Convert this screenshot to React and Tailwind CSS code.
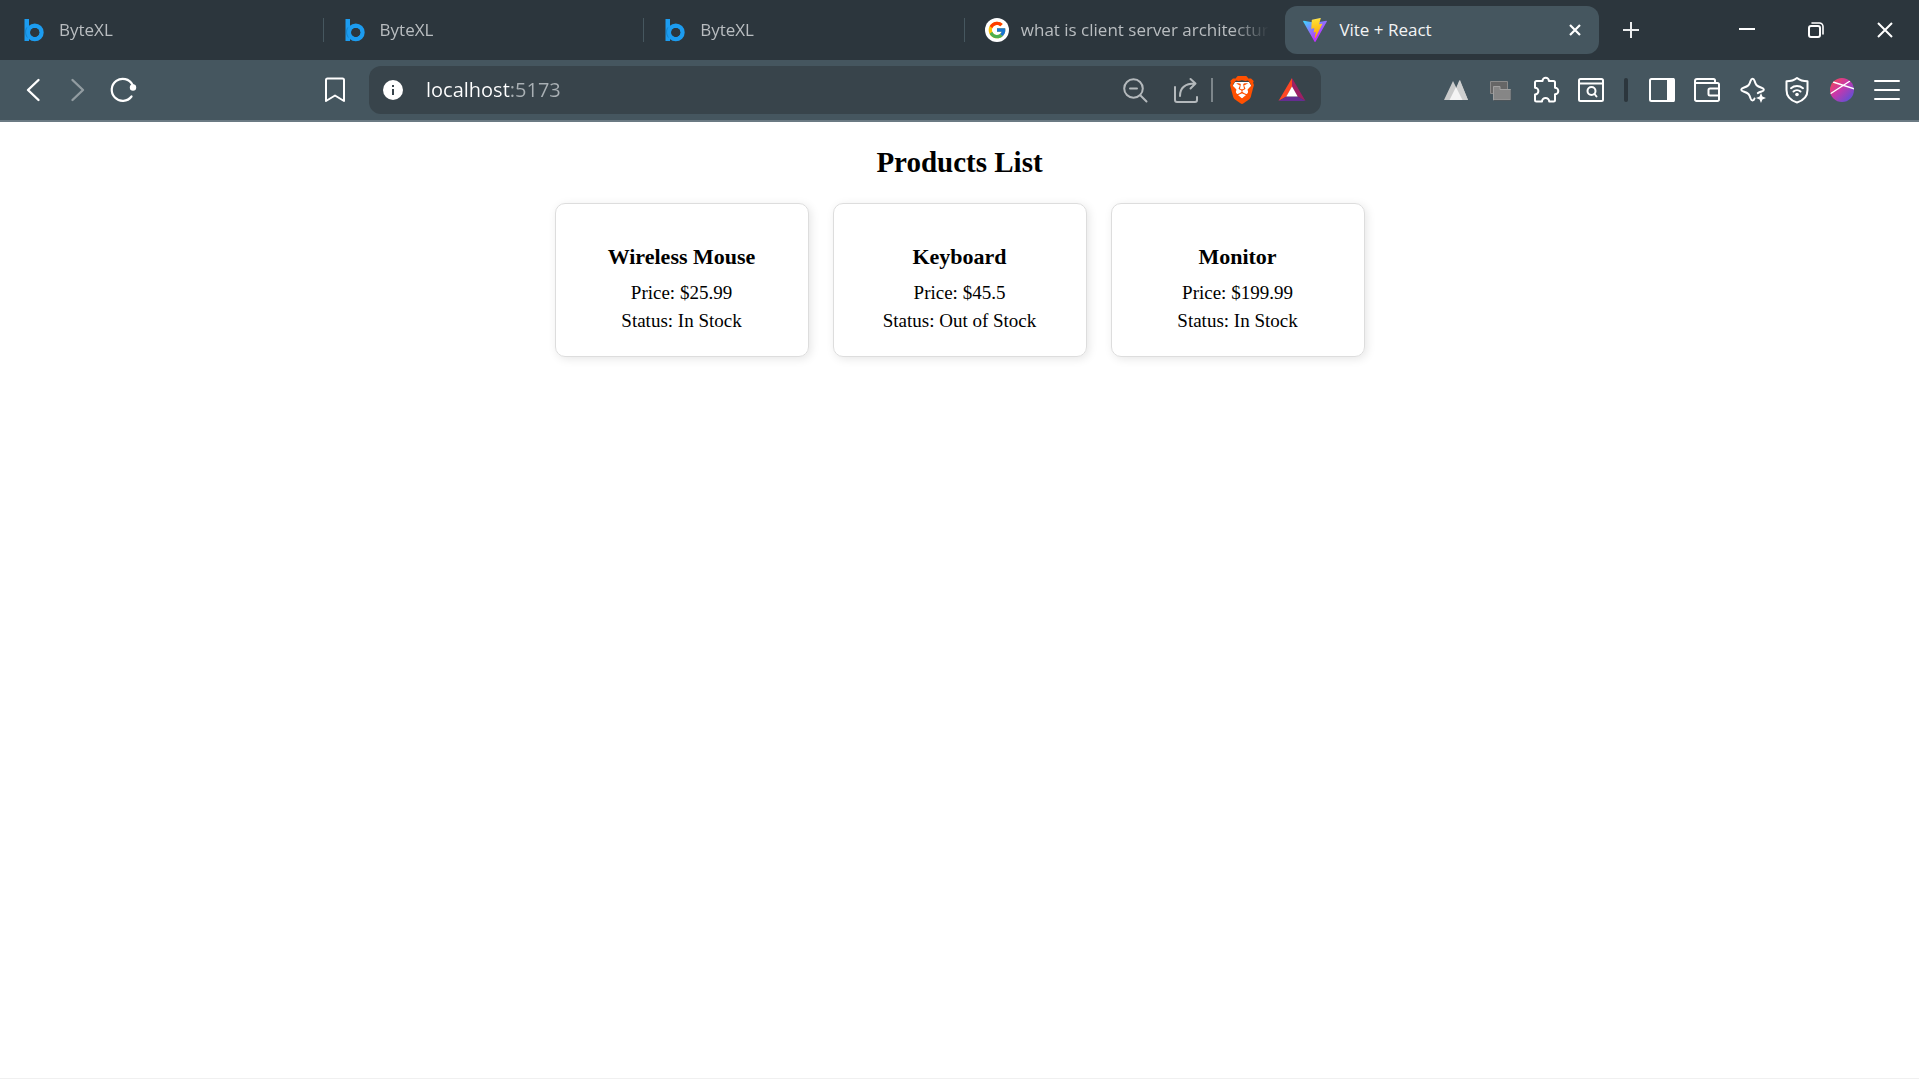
import React from "react";
import { FcGoogle } from "react-icons/fc";
import { SiBrave } from "react-icons/si";

const stroke = {
  fill: "none",
  stroke: "currentColor",
  strokeWidth: 2,
  strokeLinecap: "round",
  strokeLinejoin: "round",
};

function Icon({ children, size = 28, className = "" }) {
  return (
    <svg width={size} height={size} viewBox={`0 0 ${size} ${size}`} aria-hidden="true" className={`shrink-0 ${className}`} {...stroke}>
      {children}
    </svg>
  );
}

function ByteXLLogo() {
  return (
    <svg width="24" height="24" viewBox="0 0 24 24" aria-hidden="true" className="shrink-0" fill="none">
      <path d="M1.500 1H6v22H1.500z" fill="#1c9cf0" />
      <circle cx="11.800" cy="14.400" r="6.700" stroke="#1c9cf0" strokeWidth="4.400" />
      <circle cx="11.800" cy="14.400" r="4.500" fill="#2c363d" />
      <path d="M3.800 9.500c-1.800 3-1.600 7 .6 10" stroke="#1478bd" strokeWidth="0.800" />
    </svg>
  );
}

function GoogleLogo() {
  return (
    <span className="flex size-6 shrink-0 items-center justify-center rounded-full bg-white">
      <FcGoogle size={20} aria-hidden="true" />
    </span>
  );
}

function ViteLogo() {
  return (
    <svg width="24" height="24" viewBox="0 0 256 257" aria-hidden="true" className="shrink-0">
      <defs>
        <linearGradient id="viteBody" x1="0" x2="0.58" y1="0.08" y2="0.78">
          <stop offset="0" stopColor="#41D1FF" />
          <stop offset="1" stopColor="#BD34FE" />
        </linearGradient>
        <linearGradient id="viteBolt" x1="0.43" x2="0.5" y1="0.02" y2="0.89">
          <stop offset="0" stopColor="#FFEA83" />
          <stop offset="0.08" stopColor="#FFDD35" />
          <stop offset="1" stopColor="#FFA800" />
        </linearGradient>
      </defs>
      <path fill="url(#viteBody)" d="M255.153 37.938L134.897 252.976c-2.483 4.440-8.862 4.466-11.382.048L.875 37.958c-2.746-4.814 1.371-10.646 6.827-9.670l120.385 21.517a6.537 6.537 0 0 0 2.322-.004l117.867-21.483c5.438-.991 9.574 4.796 6.877 9.620Z" />
      <path fill="url(#viteBolt)" d="M185.432.063L96.440 17.501a3.268 3.268 0 0 0-2.634 3.014l-5.474 92.456a3.268 3.268 0 0 0 3.997 3.378l24.777-5.718c2.318-.535 4.413 1.507 3.936 3.838l-7.361 36.047c-.495 2.426 1.782 4.500 4.151 3.780l15.304-4.649c2.372-.720 4.652 1.360 4.150 3.788l-11.698 56.621c-.732 3.542 3.979 5.473 5.943 2.437l1.313-2.028l72.516-144.720c1.215-2.423-.880-5.186-3.540-4.672l-25.505 4.922c-2.396.462-4.435-1.770-3.759-4.114l16.646-57.705c.677-2.350-1.370-4.583-3.769-4.113Z" />
    </svg>
  );
}

function BraveLogo() {
  return (
    <span className="relative flex size-7 items-center justify-center text-[#ff5000]">
      <svg width="28" height="28" viewBox="0 0 28 28" aria-hidden="true" className="absolute inset-0">
        <path d="M7 6h14l3 5-4 11-6 4-6-4-4-11z" fill="#fff" />
      </svg>
      <SiBrave size={28} className="relative" aria-hidden="true" />
    </span>
  );
}

function BatLogo() {
  return (
    <svg width="28" height="28" viewBox="0 0 28 28" aria-hidden="true">
      <path d="M14 2v9L8.500 20.500 0.500 25z" fill="#ff4724" />
      <path d="M14 2v9l5.500 9.500 8 4.500z" fill="#9e1f63" />
      <path d="M0.500 25l8-4.500h11l8 4.500z" fill="#662d91" />
      <path d="M14 10.500L8.300 20.500h11.400z" fill="#fff" />
    </svg>
  );
}

function ToolButton({ label, children, className = "text-white" }) {
  return (
    <button type="button" aria-label={label} className={`flex h-12 w-[45px] shrink-0 items-center justify-center ${className}`}>
      {children}
    </button>
  );
}

function Tab({ icon, title, divided }) {
  return (
    <button type="button" role="tab" aria-selected="false" className="flex h-12 min-w-0 flex-[0_1_321px] items-center">
      <span className="flex min-w-0 flex-1 items-center gap-3 pr-4 pl-5 text-left">
        {icon}
        <span className="min-w-0 flex-1 overflow-hidden mask-r-from-85% text-[17px] leading-6 whitespace-nowrap text-[#b9bdc0]">{title}</span>
      </span>
      {divided && <span className="h-6 w-px shrink-0 bg-[#46575f]" />}
    </button>
  );
}

function TabStrip() {
  return (
    <header className="flex h-15 items-center bg-[#2c363d] pl-[3px]">
      <div role="tablist" aria-label="Open tabs" className="flex min-w-0 flex-[0_1_1596px] items-center">
        <Tab icon={<ByteXLLogo />} title="ByteXL" divided />
        <Tab icon={<ByteXLLogo />} title="ByteXL" divided />
        <Tab icon={<ByteXLLogo />} title="ByteXL" divided />
        <Tab icon={<GoogleLogo />} title="what is client server architectur" />
        <div className="flex h-12 min-w-0 flex-[0_1_314px] items-center rounded-xl bg-[#45565f] pr-3 pl-[18px]">
          <button type="button" role="tab" aria-selected="true" className="flex min-w-0 flex-1 items-center gap-3">
            <ViteLogo />
            <span className="truncate text-[17px] leading-6 text-[#f3f4f5]">Vite + React</span>
          </button>
          <button type="button" aria-label="Close tab" className="flex size-6 shrink-0 items-center justify-center text-white">
            <Icon size={12}>
              <path d="M1 1l10 10M11 1L1 11" strokeWidth="2.200" strokeLinecap="butt" />
            </Icon>
          </button>
        </div>
      </div>
      <button type="button" aria-label="New tab" className="ml-3 flex size-10 shrink-0 items-center justify-center text-[#eceeef]">
        <Icon size={16}>
          <path d="M8 0v16M0 8h16" strokeLinecap="butt" />
        </Icon>
      </button>
      <div className="ml-auto flex h-15 shrink-0 text-white">
        <button type="button" aria-label="Minimize" className="flex w-[69px] items-center justify-center">
          <Icon size={16}>
            <path d="M0 7h16" strokeLinecap="butt" />
          </Icon>
        </button>
        <button type="button" aria-label="Restore" className="flex w-[69px] items-center justify-center">
          <Icon size={16}>
            <rect x="1" y="4" width="11" height="11" rx="2" />
            <path d="M4 1h7.500a3.500 3.500 0 0 1 3.500 3.500V12" strokeWidth="1.600" />
          </Icon>
        </button>
        <button type="button" aria-label="Close window" className="flex w-[69px] items-center justify-center">
          <Icon size={16}>
            <path d="M1 1l14 14M15 1L1 15" strokeLinecap="butt" />
          </Icon>
        </button>
      </div>
    </header>
  );
}

function AddressBar() {
  return (
    <div className="ml-3 flex h-12 min-w-0 flex-1 items-center rounded-xl bg-[#38444b] pr-1 pl-[14px]">
      <button type="button" aria-label="View site information" className="shrink-0">
        <svg width="20" height="20" viewBox="0 0 20 20" aria-hidden="true">
          <circle cx="10" cy="10" r="10" fill="#fff" />
          <path d="M9 5h2v2H9zM9 9h2v6H9z" fill="#38444b" />
        </svg>
      </button>
      <input
        type="text"
        aria-label="Address"
        defaultValue="localhost:5173"
        className="ml-[23px] h-8 min-w-0 flex-1 bg-linear-[90deg,#ffffff_84px,#a9b0b4_84px] bg-clip-text text-[20px] leading-8 text-transparent caret-white outline-none"
      />
      <div className="flex shrink-0 items-center text-[#b4b9bc]">
        <button type="button" aria-label="Zoom" className="flex h-12 w-[51px] items-center justify-center">
          <Icon>
            <circle cx="12.500" cy="12.500" r="9.300" />
            <path d="M9 12.500h7M19.500 19.500l6 6" />
          </Icon>
        </button>
        <button type="button" aria-label="Share" className="flex h-12 w-[51px] items-center justify-center">
          <Icon>
            <path d="M3 11v13a2 2 0 0 0 2 2h18a2 2 0 0 0 2-2v-3" />
            <path d="M8 20c0-8 5-12.500 15-12.500M18.500 3l5 4.500-5 5" />
          </Icon>
        </button>
        <span className="h-6 w-[2px] bg-[#7d868b]" />
        <button type="button" aria-label="Brave Shields" className="ml-1 flex h-12 w-[49px] items-center justify-center">
          <BraveLogo />
        </button>
        <button type="button" aria-label="Brave Rewards" className="flex h-12 w-[51px] items-center justify-center">
          <BatLogo />
        </button>
      </div>
    </div>
  );
}

function Extensions() {
  return (
    <div className="ml-28 flex shrink-0 items-center">
      <ToolButton label="Mountain extension">
        <svg width="28" height="28" viewBox="0 0 28 28" aria-hidden="true">
          <path d="M2 24L11 5l3.500 7L18 4l8 20z" fill="#c9caca" />
          <path d="M17.500 4l-3 7L20 24h6z" fill="#cfd0d0" />
          <path d="M14 11L7.500 24h13z" fill="#f4f4f4" />
        </svg>
      </ToolButton>
      <ToolButton label="Window extension">
        <svg width="28" height="28" viewBox="0 0 28 28" aria-hidden="true">
          <path d="M3.500 5.500h17v12h-17z" fill="#666" stroke="#8b8b8b" />
          <path d="M6.500 10.500h6.500v3h10.500v10.500H6.500z" fill="#868686" stroke="#a0a0a0" />
          <path d="M7 24.500h17V14" fill="none" stroke="#4d555a" />
        </svg>
      </ToolButton>
      <ToolButton label="Extensions">
        <Icon>
          <path d="M5.500 5h5a3.200 3.200 0 0 1 6.400 0h4.600a1.500 1.500 0 0 1 1.500 1.500v5.200a3.200 3.200 0 0 1 0 6.600V24a1.500 1.500 0 0 1-1.500 1.500h-4.300a3.600 3.600 0 0 0-7.200 0H4.500A1.500 1.500 0 0 1 3 24v-5.500a3.400 3.400 0 0 0 0-6.800V6.500A1.500 1.500 0 0 1 4.500 5z" />
        </Icon>
      </ToolButton>
      <ToolButton label="Search tabs">
        <Icon>
          <rect x="2" y="3" width="24" height="22" rx="1.500" />
          <path d="M2 7.500h24" />
          <circle cx="14.500" cy="15" r="4" />
          <path d="M17.500 18l2 2.500" />
        </Icon>
      </ToolButton>
      <span className="mx-[11px] h-6 w-1 rounded-full bg-[#2c363d]" />
      <ToolButton label="Sidebar">
        <Icon>
          <rect x="2" y="3" width="24" height="22" rx="1.500" />
          <path d="M20 3h5.500v22H20z" fill="currentColor" />
        </Icon>
      </ToolButton>
      <ToolButton label="Wallet">
        <Icon>
          <path d="M22 7V4.500A1.500 1.500 0 0 0 20.500 3H4a2 2 0 0 0-2 2v18.500A1.500 1.500 0 0 0 3.500 25h21a1.500 1.500 0 0 0 1.500-1.500v-15A1.500 1.500 0 0 0 24.500 7H2.500" />
          <path d="M26 12.500h-9a1.500 1.500 0 0 0-1.500 1.500v4a1.500 1.500 0 0 0 1.500 1.500h9" />
        </Icon>
      </ToolButton>
      <ToolButton label="Leo AI">
        <Icon>
          <path d="M16.500 22.500c-.8 2.600-3 2.600-3.900 0-1.300-4.300-2-5.300-7.100-7-3-1-3-2.700 0-3.700 5.100-1.700 5.800-2.700 7.100-7 .9-2.600 3.100-2.600 3.900 0 1.300 4.300 2 5.300 7.100 7 3 1 3 2.700 0 3.700-1.500.500-2.800 1-3.800 1.600" />
          <path d="M23 17l1.400 3.600L28 22l-3.600 1.400L23 27l-1.400-3.600L18 22l3.600-1.400z" fill="currentColor" stroke="none" />
        </Icon>
      </ToolButton>
      <ToolButton label="VPN">
        <Icon>
          <path d="M14 2c3 2.500 6.500 3.300 10.500 3.300V14c0 6-4 10.500-10.500 12.500C7.500 24.500 3.500 20 3.500 14V5.300C7.500 5.300 11 4.500 14 2z" />
          <path d="M8 12.200c3.500-3 8.500-3 12 0M10.500 15.500c2-1.800 5-1.800 7 0" />
          <circle cx="14" cy="18.500" r="1.800" fill="currentColor" stroke="none" />
        </Icon>
      </ToolButton>
      <ToolButton label="Profile">
        <svg width="24" height="24" viewBox="0 0 24 24" aria-hidden="true">
          <defs>
            <linearGradient id="profile" x1="0" x2="1" y1="0" y2="1">
              <stop offset="0.100" stopColor="#f0465c" />
              <stop offset="0.450" stopColor="#c837ab" />
              <stop offset="0.900" stopColor="#5b51d8" />
            </linearGradient>
            <clipPath id="profileClip"><circle cx="12" cy="12" r="12" /></clipPath>
          </defs>
          <circle cx="12" cy="12" r="12" fill="url(#profile)" />
          <path d="M0 16L20 3M3 4l22 7" clipPath="url(#profileClip)" fill="none" stroke="#fff" strokeWidth="1.400" />
        </svg>
      </ToolButton>
      <ToolButton label="Menu">
        <Icon size={26}>
          <path d="M1 4h24M1 13h24M1 22h24" />
        </Icon>
      </ToolButton>
    </div>
  );
}

function Toolbar() {
  return (
    <nav aria-label="Browser toolbar" className="flex items-center border-b-2 border-[#6b7a83] bg-[#45565f] px-[10px] py-[6px]">
      <ToolButton label="Back">
        <Icon>
          <path d="M19.500 4L9 14l10.500 10" strokeWidth="2.400" />
        </Icon>
      </ToolButton>
      <ToolButton label="Forward" className="text-[#929ca1]">
        <Icon>
          <path d="M8.500 4L19 14 8.500 24" strokeWidth="2.400" />
        </Icon>
      </ToolButton>
      <ToolButton label="Reload">
        <Icon>
          <path d="M22.500 20.500A11 11 0 1 1 23.500 8.800" strokeWidth="2.200" />
          <circle cx="24" cy="11.500" r="3.200" fill="currentColor" stroke="none" />
        </Icon>
      </ToolButton>
      <ToolButton label="Bookmark this tab" className="ml-[167px] text-white">
        <Icon>
          <path d="M6.500 2.500h15a1.500 1.500 0 0 1 1.500 1.500v21l-9-5.500L5 25V4a1.500 1.500 0 0 1 1.500-1.500z" />
        </Icon>
      </ToolButton>
      <AddressBar />
      <Extensions />
    </nav>
  );
}

const products = [
  { name: "Wireless Mouse", price: "25.99", inStock: true },
  { name: "Keyboard", price: "45.5", inStock: false },
  { name: "Monitor", price: "199.99", inStock: true },
];

function ProductCard({ name, price, inStock }) {
  return (
    <article className="w-[254px] rounded-[10px] border border-[#dddddd] px-[18px] pt-10 pb-6 text-center shadow-[2px_2px_10px_rgba(0,0,0,0.1)]">
      <h3 className="mb-3 text-[22px] leading-[26px] font-bold">{name}</h3>
      <p className="mb-[6px] text-[19px] leading-[22px]">Price: ${price}</p>
      <p className="text-[19px] leading-[22px]">Status: {inStock ? "In Stock" : "Out of Stock"}</p>
    </article>
  );
}

export default function App() {
  return (
    <div className="flex min-h-screen flex-col border-b border-[#f0f0f0] bg-white font-['Open_Sans',sans-serif]">
      <TabStrip />
      <Toolbar />
      <main className="flex-1 px-6 pt-6 font-['Liberation_Serif',serif] text-black">
        <h2 className="mb-6 text-center text-[29px] leading-[33px] font-bold">Products List</h2>
        <div className="flex flex-wrap justify-center gap-6">
          {products.map((product) => (
            <ProductCard key={product.name} {...product} />
          ))}
        </div>
      </main>
    </div>
  );
}
